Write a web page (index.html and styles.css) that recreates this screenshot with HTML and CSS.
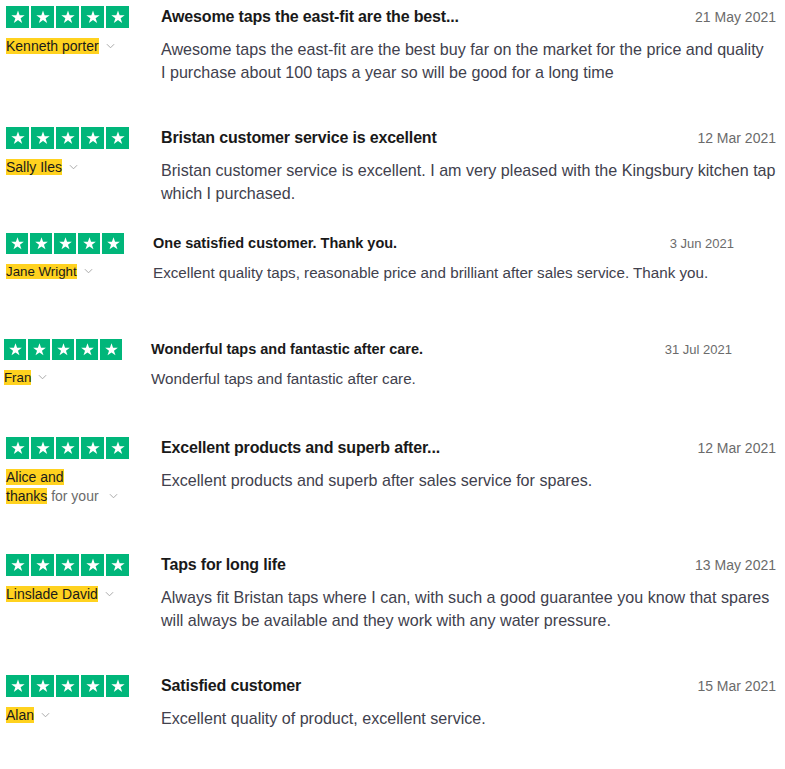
FILE: index.html
```html
<!DOCTYPE html>
<html lang="en">
<head>
    <meta charset="UTF-8">
    <meta name="viewport" content="width=device-width, initial-scale=1.0">
    <title>Customer Reviews</title>
    <link rel="stylesheet" href="styles.css">
</head>
<body>
    <svg class="defs" width="0" height="0" aria-hidden="true">
        <symbol id="star" viewBox="0 0 24 24">
            <path d="M12 3.2l2.2 6.4h6.7l-5.4 4 2.1 6.5L12 16.1l-5.6 4 2.1-6.5-5.4-4h6.7z"/>
        </symbol>
        <symbol id="chevron" viewBox="0 0 10 6">
            <polyline points="1,1 5,5 9,1"/>
        </symbol>
    </svg>

    <main class="reviews">

        <article class="review">
            <div class="review-aside">
                <div class="stars">
                    <span class="star"><svg><use href="#star"/></svg></span>
                    <span class="star"><svg><use href="#star"/></svg></span>
                    <span class="star"><svg><use href="#star"/></svg></span>
                    <span class="star"><svg><use href="#star"/></svg></span>
                    <span class="star"><svg><use href="#star"/></svg></span>
                </div>
                <div class="author"><span class="author-name">Kenneth porter</span><svg class="chevron"><use href="#chevron"/></svg></div>
            </div>
            <div class="review-main">
                <div class="review-head">
                    <h3 class="review-title">Awesome taps the east-fit are the best...</h3>
                    <time class="review-date">21 May 2021</time>
                </div>
                <p class="review-text">Awesome taps the east-fit are the best buy far on the market for the price and quality<br>I purchase about 100 taps a year so will be good for a long time</p>
            </div>
        </article>

        <article class="review review--tight">
            <div class="review-aside">
                <div class="stars">
                    <span class="star"><svg><use href="#star"/></svg></span>
                    <span class="star"><svg><use href="#star"/></svg></span>
                    <span class="star"><svg><use href="#star"/></svg></span>
                    <span class="star"><svg><use href="#star"/></svg></span>
                    <span class="star"><svg><use href="#star"/></svg></span>
                </div>
                <div class="author"><span class="author-name">Sally Iles</span><svg class="chevron"><use href="#chevron"/></svg></div>
            </div>
            <div class="review-main">
                <div class="review-head">
                    <h3 class="review-title">Bristan customer service is excellent</h3>
                    <time class="review-date">12 Mar 2021</time>
                </div>
                <p class="review-text">Bristan customer service is excellent. I am very pleased with the Kingsbury kitchen tap<br>which I purchased.</p>
            </div>
        </article>

        <article class="review review--compact review--loose">
            <div class="review-aside">
                <div class="stars">
                    <span class="star"><svg><use href="#star"/></svg></span>
                    <span class="star"><svg><use href="#star"/></svg></span>
                    <span class="star"><svg><use href="#star"/></svg></span>
                    <span class="star"><svg><use href="#star"/></svg></span>
                    <span class="star"><svg><use href="#star"/></svg></span>
                </div>
                <div class="author"><span class="author-name">Jane Wright</span><svg class="chevron"><use href="#chevron"/></svg></div>
            </div>
            <div class="review-main">
                <div class="review-head">
                    <h3 class="review-title">One satisfied customer. Thank you.</h3>
                    <time class="review-date">3 Jun 2021</time>
                </div>
                <p class="review-text">Excellent quality taps, reasonable price and brilliant after sales service. Thank you.</p>
            </div>
        </article>

        <article class="review review--compact review--left">
            <div class="review-aside">
                <div class="stars">
                    <span class="star"><svg><use href="#star"/></svg></span>
                    <span class="star"><svg><use href="#star"/></svg></span>
                    <span class="star"><svg><use href="#star"/></svg></span>
                    <span class="star"><svg><use href="#star"/></svg></span>
                    <span class="star"><svg><use href="#star"/></svg></span>
                </div>
                <div class="author"><span class="author-name">Fran</span><svg class="chevron"><use href="#chevron"/></svg></div>
            </div>
            <div class="review-main">
                <div class="review-head">
                    <h3 class="review-title">Wonderful taps and fantastic after care.</h3>
                    <time class="review-date">31 Jul 2021</time>
                </div>
                <p class="review-text">Wonderful taps and fantastic after care.</p>
            </div>
        </article>

        <article class="review review--roomy">
            <div class="review-aside">
                <div class="stars">
                    <span class="star"><svg><use href="#star"/></svg></span>
                    <span class="star"><svg><use href="#star"/></svg></span>
                    <span class="star"><svg><use href="#star"/></svg></span>
                    <span class="star"><svg><use href="#star"/></svg></span>
                    <span class="star"><svg><use href="#star"/></svg></span>
                </div>
                <div class="author"><span class="author-name">Alice and<br>thanks</span> <span class="author-rest">for your</span><svg class="chevron chevron--wide"><use href="#chevron"/></svg></div>
            </div>
            <div class="review-main">
                <div class="review-head">
                    <h3 class="review-title">Excellent products and superb after...</h3>
                    <time class="review-date">12 Mar 2021</time>
                </div>
                <p class="review-text">Excellent products and superb after sales service for spares.</p>
            </div>
        </article>

        <article class="review">
            <div class="review-aside">
                <div class="stars">
                    <span class="star"><svg><use href="#star"/></svg></span>
                    <span class="star"><svg><use href="#star"/></svg></span>
                    <span class="star"><svg><use href="#star"/></svg></span>
                    <span class="star"><svg><use href="#star"/></svg></span>
                    <span class="star"><svg><use href="#star"/></svg></span>
                </div>
                <div class="author"><span class="author-name">Linslade David</span><svg class="chevron"><use href="#chevron"/></svg></div>
            </div>
            <div class="review-main">
                <div class="review-head">
                    <h3 class="review-title">Taps for long life</h3>
                    <time class="review-date">13 May 2021</time>
                </div>
                <p class="review-text">Always fit Bristan taps where I can, with such a good guarantee you know that spares<br>will always be available and they work with any water pressure.</p>
            </div>
        </article>

        <article class="review">
            <div class="review-aside">
                <div class="stars">
                    <span class="star"><svg><use href="#star"/></svg></span>
                    <span class="star"><svg><use href="#star"/></svg></span>
                    <span class="star"><svg><use href="#star"/></svg></span>
                    <span class="star"><svg><use href="#star"/></svg></span>
                    <span class="star"><svg><use href="#star"/></svg></span>
                </div>
                <div class="author"><span class="author-name">Alan</span><svg class="chevron"><use href="#chevron"/></svg></div>
            </div>
            <div class="review-main">
                <div class="review-head">
                    <h3 class="review-title">Satisfied customer</h3>
                    <time class="review-date">15 Mar 2021</time>
                </div>
                <p class="review-text">Excellent quality of product, excellent service.</p>
            </div>
        </article>

    </main>
</body>
</html>
```

FILE: styles.css
```css
body {
    margin: 0;
    font-family: "Liberation Sans", Arial, sans-serif;
    background-color: #fff;
    color: #1c1c1c;
}
.defs {
    position: absolute;
}
.reviews {
    padding-top: 6px;
}

/* one review row: stars + author on the left, text on the right */
.review {
    display: flex;
    align-items: flex-start;
    padding: 0 9px 0 6px;
    margin-bottom: 43px;
}
.review--tight {
    margin-bottom: 28px;
}
.review--loose {
    margin-bottom: 55px;
}
.review--roomy {
    margin-bottom: 48px;
}
.review-aside {
    flex: 0 0 155px;
}
.review-main {
    flex: 1;
    min-width: 0;
}

.stars {
    display: flex;
    gap: 2px;
}
.star {
    width: 23px;
    height: 22px;
    background-color: #00b67a;
    display: flex;
    align-items: center;
    justify-content: center;
}
.star svg {
    width: 18px;
    height: 18px;
    fill: #fff;
}

.author {
    margin-top: 9px;
    font-size: 14px;
    line-height: 19px;
    color: #1a1a1a;
}
.author-name {
    background-color: #ffd21f;
}
.author-rest {
    color: #6b6b6b;
}
.chevron {
    width: 9px;
    height: 6px;
    margin-left: 7px;
    vertical-align: 2px;
    fill: none;
    stroke: #a0a0a0;
    stroke-width: 1;
}
.chevron--wide {
    margin-left: 10px;
}

.review-head {
    display: flex;
    justify-content: space-between;
    align-items: baseline;
    line-height: 22px;
}
.review-title {
    margin: 0;
    font-size: 16px;
    font-weight: bold;
    letter-spacing: -0.17px;
    color: #191919;
}
.review-date {
    font-size: 14px;
    color: #6b6b6b;
}
.review-text {
    margin: 10px 0 0;
    font-size: 16.1px;
    line-height: 23px;
    color: #41414d;
}

/* rows 3 and 4 were captured a little smaller */
.review--compact {
    padding-right: 51px;
}
.review--compact.review--left {
    padding-left: 4px;
    padding-right: 53px;
    margin-bottom: 47px;
}
.review--compact .review-aside {
    flex-basis: 147px;
}
.review--compact .star {
    width: 22px;
    height: 21px;
}
.review--compact .star svg {
    width: 17px;
    height: 17px;
}
.review--compact .author {
    margin-top: 8px;
    font-size: 13.3px;
}
.review--compact .review-head {
    line-height: 21px;
}
.review--compact .review-title {
    font-size: 14.5px;
    letter-spacing: 0;
}
.review--compact .review-date {
    font-size: 13px;
}
.review--compact .review-text {
    margin-top: 8px;
    font-size: 15.2px;
    line-height: 22px;
}
```
